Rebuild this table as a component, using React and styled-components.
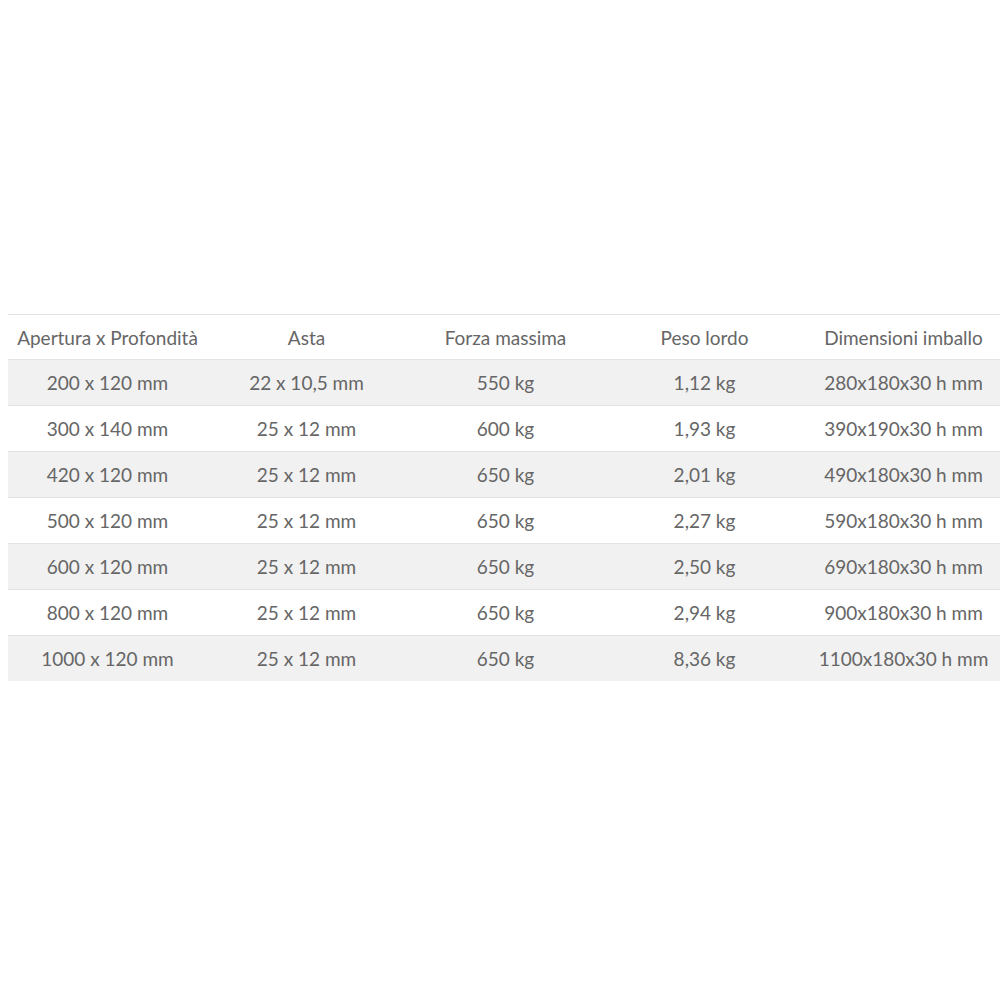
import React from 'react';
import styled, { createGlobalStyle } from 'styled-components';

const GlobalStyle = createGlobalStyle`
  html, body {
    margin: 0;
    padding: 0;
    background: #FFFFFF;
    overflow: hidden;
  }
`;

const Page = styled.div`
  padding: 314px 0 0 8px;
  font-family: Lato, "Liberation Sans", sans-serif;
`;

const Table = styled.table`
  width: 995px;
  border-collapse: collapse;
  table-layout: fixed;
  border-top: 1px solid #E3E3E7;
`;

const HeadCell = styled.th`
  height: 44px;
  padding: 0;
  font-weight: 400;
  font-size: 19px;
  color: #666666;
  text-align: center;
  border-bottom: 1px solid #E3E3E7;
`;

const Row = styled.tr`
  background: ${(props) => (props.striped ? '#F1F1F1' : '#FFFFFF')};
  border-bottom: ${(props) => (props.last ? 'none' : '1px solid #E3E3E7')};
`;

const Cell = styled.td`
  height: 45px;
  padding: 0;
  font-size: 19px;
  color: #666666;
  text-align: center;
`;

const headers = ['Apertura x Profondità', 'Asta', 'Forza massima', 'Peso lordo', 'Dimensioni imballo'];

const rows = [
  ['200 x 120 mm', '22 x 10,5 mm', '550 kg', '1,12 kg', '280x180x30 h mm'],
  ['300 x 140 mm', '25 x 12 mm', '600 kg', '1,93 kg', '390x190x30 h mm'],
  ['420 x 120 mm', '25 x 12 mm', '650 kg', '2,01 kg', '490x180x30 h mm'],
  ['500 x 120 mm', '25 x 12 mm', '650 kg', '2,27 kg', '590x180x30 h mm'],
  ['600 x 120 mm', '25 x 12 mm', '650 kg', '2,50 kg', '690x180x30 h mm'],
  ['800 x 120 mm', '25 x 12 mm', '650 kg', '2,94 kg', '900x180x30 h mm'],
  ['1000 x 120 mm', '25 x 12 mm', '650 kg', '8,36 kg', '1100x180x30 h mm'],
];

const App = () => {
  return (
    <Page>
      <GlobalStyle />
      <Table>
        <thead>
          <tr>
            {headers.map((h) => (
              <HeadCell key={h}>{h}</HeadCell>
            ))}
          </tr>
        </thead>
        <tbody>
          {rows.map((row, i) => (
            <Row key={i} striped={i % 2 === 0} last={i === rows.length - 1}>
              {row.map((value, j) => (
                <Cell key={j}>{value}</Cell>
              ))}
            </Row>
          ))}
        </tbody>
      </Table>
    </Page>
  );
};

export default App;
